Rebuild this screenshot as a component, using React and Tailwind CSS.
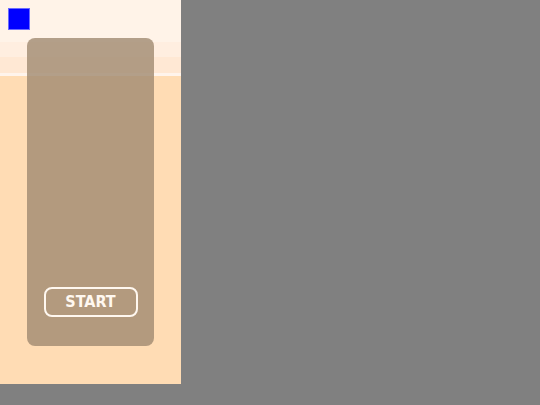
import React from "react";

const App = () => {
  return (
    <div className="w-[540px] h-[405px] bg-[#808080] overflow-hidden">
      <div className="relative w-[181px] h-[384px] bg-[#ffdcb4] flex flex-col">
        <div className="h-[42px] bg-[#fff3e8]" />
        <div className="h-[15px] bg-[#ffeee0]" />
        <div className="h-[16px] bg-[#ffe8d4]" />
        <div className="h-[3px] bg-[#fff4ec]" />
        <div className="absolute left-2 top-2 w-[22px] h-[22px] bg-[#0000ff] border border-[#6b6bff]" />
        <div className="absolute left-[27px] top-[38px] w-[127px] h-[308px] rounded-[8px] bg-[#a08a70]/80 flex flex-col items-center justify-end pb-[29px]">
          <button className="w-[94px] h-[30px] rounded-[8px] border-2 border-[#fff8f0] text-[#fff8f0] text-[16px] font-bold flex items-center justify-center font-['DejaVu_Sans_Condensed','DejaVu_Sans',sans-serif]">
            START
          </button>
        </div>
      </div>
    </div>
  );
};

export default App;
